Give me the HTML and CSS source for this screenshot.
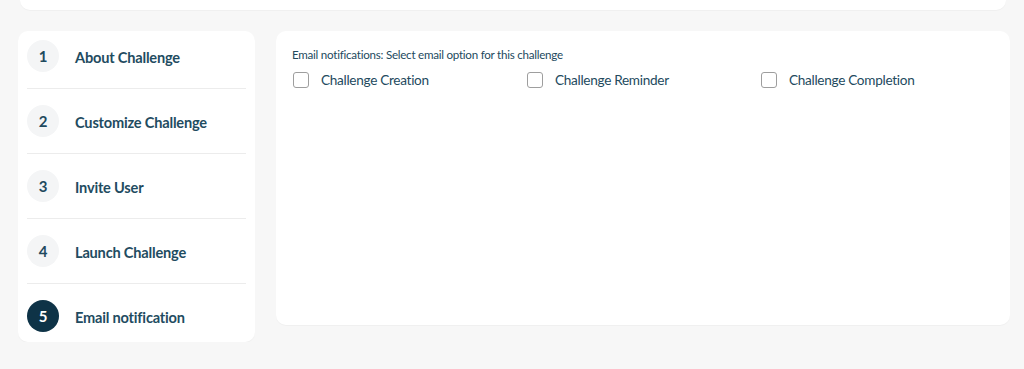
FILE: index.html
```html
<!DOCTYPE html>
<html lang="en">
<head>
    <meta charset="UTF-8">
    <meta name="viewport" content="width=device-width, initial-scale=1.0">
    <title>Create Challenge - Email notification</title>
    <link rel="stylesheet" href="styles.css">
</head>
<body>
    <div class="top-card"></div>

    <main class="wizard">
        <!-- Steps -->
        <aside class="steps">
            <div class="step">
                <span class="step-num">1</span>
                <span class="step-name">About Challenge</span>
            </div>
            <div class="step">
                <span class="step-num">2</span>
                <span class="step-name">Customize Challenge</span>
            </div>
            <div class="step">
                <span class="step-num">3</span>
                <span class="step-name">Invite User</span>
            </div>
            <div class="step">
                <span class="step-num">4</span>
                <span class="step-name">Launch Challenge</span>
            </div>
            <div class="step active">
                <span class="step-num">5</span>
                <span class="step-name">Email notification</span>
            </div>
        </aside>

        <!-- Email options -->
        <section class="panel">
            <p class="panel-title">Email notifications: Select email option for this challenge</p>
            <div class="options">
                <label class="option"><input type="checkbox"><span class="box"></span>Challenge Creation</label>
                <label class="option"><input type="checkbox"><span class="box"></span>Challenge Reminder</label>
                <label class="option"><input type="checkbox"><span class="box"></span>Challenge Completion</label>
            </div>
        </section>
    </main>
</body>
</html>
```

FILE: styles.css
```css
/* General */
body {
    margin: 0;
    font-family: Lato, "Open Sans", Arial, sans-serif;
    background-color: #f7f7f7;
    color: #1f4a5e;
}

/* Card above, scrolled out of view */
.top-card {
    height: 10px;
    margin: 0 18px 0 20px;
    background: white;
    border-radius: 0 0 10px 10px;
    box-shadow: 0 1px 1px rgba(0, 0, 0, 0.03);
}

.wizard {
    display: flex;
    align-items: flex-start;
    gap: 21px;
    padding: 21px 14px 0 18px;
}

/* Steps */
.steps {
    width: 237px;
    height: 311px;
    box-sizing: border-box;
    padding: 9px 9px;
    background: white;
    border-radius: 10px;
    box-shadow: 0 1px 1px rgba(0, 0, 0, 0.03);
}

.step {
    display: flex;
    align-items: center;
    gap: 16px;
    padding: 16px 0;
    border-bottom: 1px solid #ececec;
}

.step:first-child {
    padding-top: 0;
}

.step:last-child {
    padding-bottom: 0;
    border-bottom: none;
}

.step-num {
    width: 32px;
    height: 32px;
    border-radius: 50%;
    background: #f4f5f6;
    color: #1f4a5e;
    font-size: 15px;
    font-weight: bold;
    display: flex;
    align-items: center;
    justify-content: center;
}

.step-name {
    padding-top: 2px;
    font-size: 14.6px;
    letter-spacing: -0.2px;
    font-weight: bold;
    color: #1f4c61;
}

.step.active .step-num {
    background: #0e3347;
    color: white;
}

/* Panel */
.panel {
    flex: 1;
    height: 294px;
    box-sizing: border-box;
    padding: 16px;
    background: white;
    border-radius: 10px;
    box-shadow: 0 1px 1px rgba(0, 0, 0, 0.03);
}

.panel-title {
    margin: 0 0 8px;
    font-size: 11.6px;
    letter-spacing: -0.25px;
    line-height: 15px;
    color: #234a5e;
}

.options {
    display: flex;
}

.option {
    width: 234px;
    display: flex;
    align-items: center;
    height: 20px;
    font-size: 13.6px;
    letter-spacing: -0.3px;
    color: #234a5e;
    cursor: pointer;
}

.option input {
    display: none;
}

.option .box {
    width: 14px;
    height: 14px;
    margin: 0 12px 0 1px;
    border: 1px solid #9e9e9e;
    border-radius: 3px;
    background: white;
}

.option input:checked + .box {
    background: #0e3347;
    border-color: #0e3347;
}
```
